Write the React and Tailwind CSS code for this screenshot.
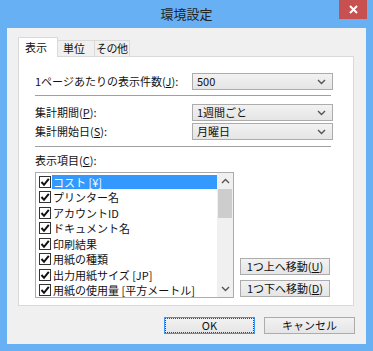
const font = { fontFamily: '"Noto Sans CJK JP", "Noto Sans", sans-serif' };

const items = [
  "コスト [¥]",
  "プリンター名",
  "アカウントID",
  "ドキュメント名",
  "印刷結果",
  "用紙の種類",
  "出力用紙サイズ [JP]",
  "用紙の使用量 [平方メートル]",
];

function Chevron({ up }) {
  return (
    <svg width="9" height="6" viewBox="0 0 9 6" className="shrink-0">
      <path
        d={up ? "M1 5 L4.5 1.5 L8 5" : "M1 1 L4.5 4.5 L8 1"}
        fill="none"
        stroke="#555"
        strokeWidth="1.4"
      />
    </svg>
  );
}

function Select({ value }) {
  return (
    <div className="w-[141px] h-[17px] flex items-center justify-between pl-[4px] pr-[6px] border border-[#acacac] bg-gradient-to-b from-[#f2f2f2] to-[#e5e5e5] text-[11px] text-[#111] leading-none">
      <span>{value}</span>
      <Chevron />
    </div>
  );
}

function Btn({ children, className = "", focus }) {
  return (
    <div
      className={
        "h-[17px] flex items-center justify-center border bg-gradient-to-b from-[#f2f2f2] to-[#e5e5e5] text-[11px] text-[#111] leading-none " +
        (focus ? "border-[#3399ff] " : "border-[#acacac] ") +
        className
      }
    >
      {focus ? (
        <div className="w-full h-full border border-dotted border-[#444] flex items-center justify-center">
          {children}
        </div>
      ) : (
        children
      )}
    </div>
  );
}

function Check() {
  return (
    <div className="w-[12px] h-[12px] border border-[#333] bg-white flex items-center justify-center shrink-0">
      <svg width="10" height="10" viewBox="0 0 10 10">
        <path d="M1.5 5 L4 7.8 L8.8 1.8" fill="none" stroke="#111" strokeWidth="2" />
      </svg>
    </div>
  );
}

export default function App() {
  return (
    <div className="w-[373px] h-[351px] bg-[#68b0f4] flex flex-col px-[7px] pb-[7px]" style={font}>
      <div className="relative h-[28px] flex items-center justify-center">
        <span className="text-[13px] text-[#222]">環境設定</span>
        <div className="absolute top-0 right-[-1px] w-[28px] h-[19px] bg-[#c75050] flex items-center justify-center">
          <svg width="9" height="9" viewBox="0 0 9 9">
            <path d="M1 1 L8 8 M8 1 L1 8" stroke="#fff" strokeWidth="2" />
          </svg>
        </div>
      </div>

      <div className="flex-1 bg-[#f0f0f0] flex flex-col pl-[11px] pr-[12px]">
        <div className="flex items-end h-[28px] pt-[9px] text-[11px] text-[#111] whitespace-nowrap">
          <div className="w-[40px] h-[20px] bg-white border border-b-0 border-[#d9d9d9] pl-[6px] leading-[18px] relative top-[1px]">
            表示
          </div>
          <div className="w-[37px] h-[16px] bg-[#f0f0f0] border border-l-0 border-b-0 border-[#d9d9d9] pl-[5px] leading-[15px]">
            単位
          </div>
          <div className="w-[35px] h-[16px] bg-[#f0f0f0] border border-l-0 border-b-0 border-[#d9d9d9] pl-[1px] leading-[15px] tracking-[-0.5px]">
            その他
          </div>
        </div>

        <div className="h-[250px] bg-white border border-[#d9d9d9] pl-[16px] pr-[20px] pt-[16px] flex flex-col text-[11px] text-[#111]">
          <div className="flex items-center justify-between">
            <span>1ページあたりの表示件数(<u>J</u>):</span>
            <Select value="500" />
          </div>
          <div className="h-px bg-[#a0a0a0] mt-[5px] mr-[2px]" />
          <div className="flex items-center justify-between mt-[8px]">
            <span>集計期間(<u>P</u>):</span>
            <Select value="1週間ごと" />
          </div>
          <div className="flex items-center justify-between mt-[2px]">
            <span>集計開始日(<u>S</u>):</span>
            <Select value="月曜日" />
          </div>
          <div className="h-px bg-[#a0a0a0] mt-[6px] mr-[2px]" />
          <div className="mt-[8px] leading-none">
            表示項目(<u>C</u>):
          </div>
          <div className="flex mt-[6px]">
            <div className="w-[199px] h-[126px] border border-[#acacac] flex overflow-hidden">
              <div className="flex-1 flex flex-col pt-[1px] pl-[3px]">
                {items.map((t, i) => (
                  <div key={t} className="h-[15.5px] flex items-center shrink-0">
                    <Check />
                    <span
                      className={
                        "ml-[1px] flex-1 h-[14px] leading-[14px] pl-[1px] whitespace-nowrap " +
                        (i === 0 ? "bg-[#3399ff] text-white" : "")
                      }
                    >
                      {t}
                    </span>
                  </div>
                ))}
              </div>
              <div className="w-[16px] bg-[#f0f0f0] flex flex-col">
                <div className="h-[16px] flex items-center justify-center">
                  <Chevron up />
                </div>
                <div className="h-[29px] bg-[#cdcdcd] mx-[1px]" />
                <div className="flex-1" />
                <div className="h-[16px] flex items-center justify-center">
                  <Chevron />
                </div>
              </div>
            </div>
            <div className="flex flex-col justify-end ml-[6px] gap-[5px] pb-[1px]">
              <Btn className="w-[90px]">1つ上へ移動(<u>U</u>)</Btn>
              <Btn className="w-[90px]">1つ下へ移動(<u>D</u>)</Btn>
            </div>
          </div>
        </div>

        <div className="flex justify-end gap-[9px] mt-[11px] mr-[-1px]">
          <Btn className="w-[91px]" focus>OK</Btn>
          <Btn className="w-[91px]">キャンセル</Btn>
        </div>
      </div>
    </div>
  );
}
